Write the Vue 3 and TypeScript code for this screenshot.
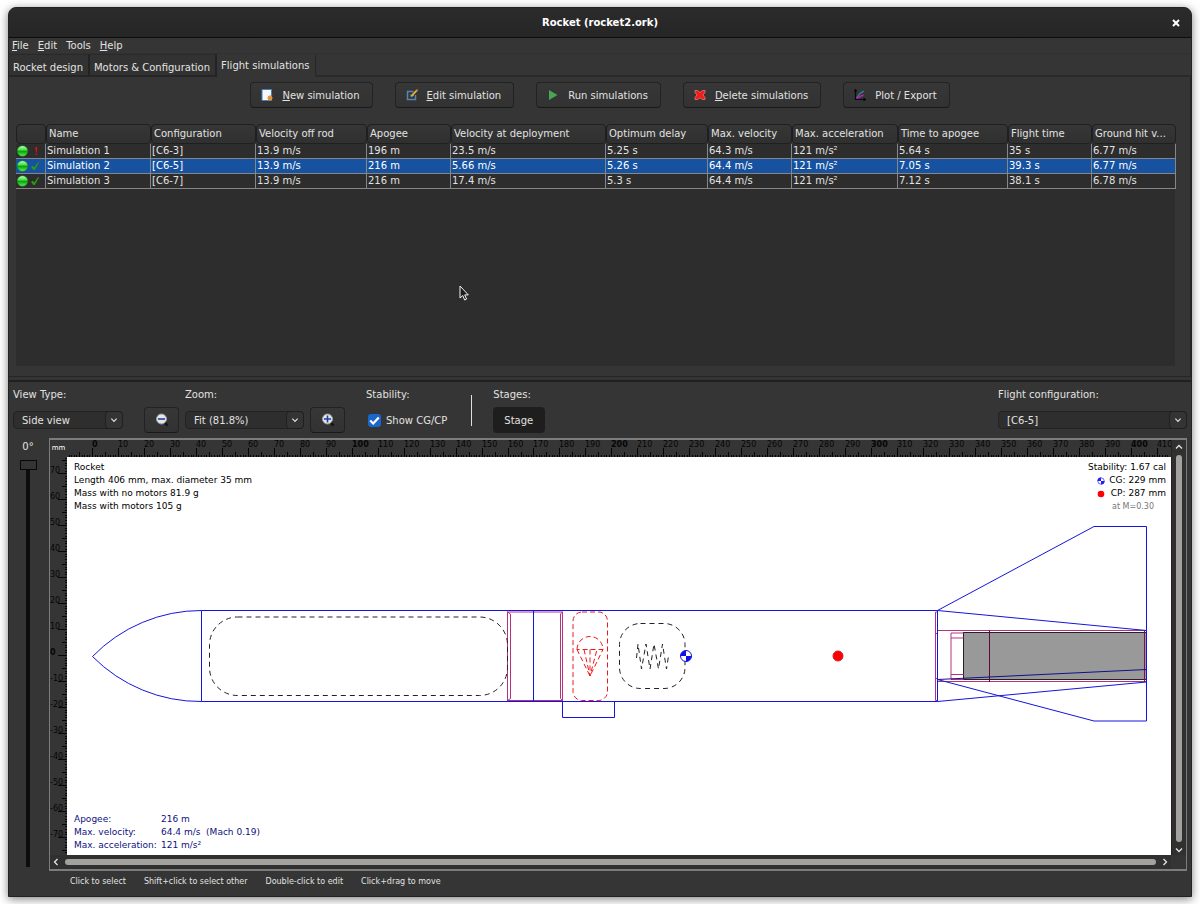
<script setup lang="ts">
import { ref } from 'vue'

interface Simulation {
  status: 'warn' | 'ok'
  cells: string[]
}

interface Tick {
  mm: number
  pos: number
  size: number
}

const menus = [
  { key: 'F', rest: 'ile' },
  { key: 'E', rest: 'dit' },
  { key: '', rest: 'Tools' },
  { key: 'H', rest: 'elp' },
]
const tabs = ['Rocket design', 'Motors & Configuration', 'Flight simulations']
const activeTab = ref(2)

const actions = [
  { icon: 'new', key: 'N', rest: 'ew simulation' },
  { icon: 'edit', key: 'E', rest: 'dit simulation' },
  { icon: 'run', key: '', rest: 'Run simulations' },
  { icon: 'delete', key: 'D', rest: 'elete simulations' },
  { icon: 'plot', key: '', rest: 'Plot / Export' },
]

const columns = [
  'Name', 'Configuration', 'Velocity off rod', 'Apogee', 'Velocity at deployment', 'Optimum delay',
  'Max. velocity', 'Max. acceleration', 'Time to apogee', 'Flight time', 'Ground hit v...',
]
const simulations: Simulation[] = [
  { status: 'warn', cells: ['Simulation 1', '[C6-3]', '13.9 m/s', '196 m', '23.5 m/s', '5.25 s', '64.3 m/s', '121 m/s²', '5.64 s', '35 s', '6.77 m/s'] },
  { status: 'ok', cells: ['Simulation 2', '[C6-5]', '13.9 m/s', '216 m', '5.66 m/s', '5.26 s', '64.4 m/s', '121 m/s²', '7.05 s', '39.3 s', '6.77 m/s'] },
  { status: 'ok', cells: ['Simulation 3', '[C6-7]', '13.9 m/s', '216 m', '17.4 m/s', '5.3 s', '64.4 m/s', '121 m/s²', '7.12 s', '38.1 s', '6.78 m/s'] },
]
const selected = ref(1)
const showCg = ref(true)
const rotation = ref(0)

const PX_PER_MM = 2.597
const ORIGIN_X = 92
const ORIGIN_Y = 655

function tickSize(mm: number): number {
  if (mm % 10 === 0) return 9
  return mm % 5 === 0 ? 5 : 2
}

function ticks(from: number, to: number, origin: number, scale: number): Tick[] {
  return Array.from({ length: to - from + 1 }, (_, i) => {
    const mm = from + i
    return { mm, pos: Math.round(origin + mm * scale), size: tickSize(mm) }
  })
}

const hTicks = ticks(-9, 414, ORIGIN_X, PX_PER_MM)
const vTicks = ticks(-76, 76, ORIGIN_Y, -PX_PER_MM)
const hLabels = hTicks.filter((t) => t.mm % 10 === 0)
const vLabels = vTicks.filter((t) => t.mm % 10 === 0)

const hPath = hTicks.map((t) => `M${t.pos + 0.5} 457v-${t.size}`).join('')
const vPath = vTicks.map((t) => `M67 ${t.pos + 0.5}h-${t.size}`).join('')

const performance = [
  { name: 'Apogee:', value: '216 m' },
  { name: 'Max. velocity:', value: '64.4 m/s  (Mach 0.19)' },
  { name: 'Max. acceleration:', value: '121 m/s²' },
]
const hints = ['Click to select', 'Shift+click to select other', 'Double-click to edit', 'Click+drag to move']
</script>

<template>
  <div class="desktop">
    <div class="window">
      <header class="titlebar">
        <h1>Rocket (rocket2.ork)</h1>
        <button class="close" aria-label="Close">
          <svg width="8" height="8" viewBox="0 0 8 8"><path d="M1 1l6 6M7 1L1 7" stroke="#fff" stroke-width="2" /></svg>
        </button>
      </header>

      <nav class="menubar">
        <button v-for="m in menus" :key="m.rest"><u v-if="m.key">{{ m.key }}</u>{{ m.rest }}</button>
      </nav>

      <div class="tabs" role="tablist">
        <button
          v-for="(t, i) in tabs"
          :key="t"
          role="tab"
          :aria-selected="activeTab === i"
          :class="['tab', { active: activeTab === i }]"
          @click="activeTab = i"
        >{{ t }}</button>
        <span class="tab-fill"></span>
      </div>

      <section class="sims">
        <div class="actions">
          <button v-for="a in actions" :key="a.icon" class="btn action">
            <svg v-if="a.icon === 'new'" width="12" height="12" viewBox="0 0 12 12">
              <path d="M1 .5h9.500v11h-9.500z" fill="#f4f8fc" stroke="#4a7db5" />
              <circle cx="9" cy="9" r="2.200" fill="#f0a040" />
              <path d="M9 5.800v6.200M5.900 9h6.100M6.800 6.800l4.400 4.400M11.200 6.800L6.800 11.200" stroke="#e08a2c" stroke-width=".8" />
            </svg>
            <svg v-else-if="a.icon === 'edit'" width="12" height="12" viewBox="0 0 12 12">
              <path d="M7.500 2.500h-6v8h8V6" fill="none" stroke="#4f86bd" stroke-width="1.500" />
              <path d="M4 5.500l2 2 2-1.500" fill="none" stroke="#5f96c8" />
              <path d="M4.500 8l.6-2L10 1l1.300 1.200L6.300 7.300z" fill="#f0b429" />
              <path d="M10 1l1-1 1 1.200-.8 1z" fill="#d88a5a" />
            </svg>
            <svg v-else-if="a.icon === 'run'" width="12" height="12" viewBox="0 0 12 12">
              <path d="M2 1l8.500 5L2 11z" fill="#4aa552" />
            </svg>
            <svg v-else-if="a.icon === 'delete'" width="12" height="12" viewBox="0 0 12 12">
              <path d="M1 1.500h2.500L6 3.500 8.500 1.500H11v2L9 6l2 2.500v2H8.500L6 8.800 3.500 10.500H1v-2L3 6 1 3.500z" fill="#f01c1c" stroke="#e87878" stroke-width=".8" />
            </svg>
            <svg v-else width="12" height="12" viewBox="0 0 12 12">
              <path d="M1.500 1v9.500H11M.3 2.500l1.200-2 1.200 2M9.500 9.300l2 1.200-2 1.200" fill="none" stroke="#08080c" stroke-width="1.200" />
              <path d="M2.500 9L6 4.500 10 2" fill="none" stroke="#2a8c9c" stroke-width="1.200" />
              <path d="M2.500 9.500L6 7.500 9.500 6" fill="none" stroke="#b022b8" stroke-width="1.500" />
            </svg>
            <span><u v-if="a.key">{{ a.key }}</u>{{ a.rest }}</span>
          </button>
        </div>

        <div class="table-view">
          <table>
            <colgroup>
              <col class="c30" /><col class="c105" /><col class="c105" /><col class="c111" /><col class="c84" /><col class="c155" />
              <col class="c102" /><col class="c84" /><col class="c106" /><col class="c110" /><col class="c84" /><col class="c84" />
            </colgroup>
            <thead>
              <tr>
                <th aria-label="Status"><div class="head"></div></th>
                <th v-for="c in columns" :key="c"><div class="head">{{ c }}</div></th>
              </tr>
            </thead>
            <tbody>
              <tr v-for="(s, i) in simulations" :key="i" :class="{ selected: selected === i }" @click="selected = i">
                <td class="status">
                  <svg width="28" height="14" viewBox="0 0 28 14">
                    <defs>
                      <linearGradient id="ball" x1="0" y1="0" x2="0" y2="1">
                        <stop offset="0" stop-color="#b8ffb8" />
                        <stop offset=".35" stop-color="#58e458" />
                        <stop offset=".55" stop-color="#08a808" />
                        <stop offset="1" stop-color="#60f060" />
                      </linearGradient>
                    </defs>
                    <circle cx="6.500" cy="7" r="5.300" fill="url(#ball)" stroke="#188018" stroke-width=".5" />
                    <path v-if="s.status === 'ok'" d="M15 8l1.800-1.200 1.400 1.800L22 3.200l1.200-.2L18.800 11h-1.300z" fill="#2f9a10" />
                    <path v-else d="M19.300 3h2l-.5 5.500h-1zM19.600 9.500h1.400v1.500h-1.400z" fill="#e01010" />
                  </svg>
                </td>
                <td v-for="(c, j) in s.cells" :key="j">{{ c }}</td>
              </tr>
            </tbody>
          </table>
          <svg class="pointer" width="10" height="16" viewBox="0 0 10 16">
            <path d="M1 1v12l2.800-2.500L5.600 15l2-.9-1.900-4.200H9.300z" fill="#1c1c1c" stroke="#f4f4f4" />
          </svg>
        </div>
      </section>

      <section class="view">
        <div class="controls">
          <div class="field f-view">
            <label for="view-type">View Type:</label>
            <div class="row"><span class="combo"><select id="view-type"><option>Side view</option></select>
              <svg width="18" height="18" viewBox="0 0 18 18"><path d="M6 7.500l3 3 3-3" /></svg></span></div>
          </div>
          <button class="btn zoom" aria-label="Zoom out">
            <svg width="14" height="14" viewBox="0 0 14 14">
              <path d="M9 9l3.500 3.500" stroke="#151515" stroke-width="2.500" />
              <circle cx="6.500" cy="6" r="5" fill="#e4e6e8" stroke="#9a9c9e" />
              <path d="M3 6h7" stroke="#2040a8" stroke-width="1.600" />
            </svg>
          </button>
          <div class="field f-zoom">
            <label for="zoom">Zoom:</label>
            <div class="row"><span class="combo"><select id="zoom"><option>Fit (81.8%)</option></select>
              <svg width="18" height="18" viewBox="0 0 18 18"><path d="M6 7.500l3 3 3-3" /></svg></span></div>
          </div>
          <button class="btn zoom" aria-label="Zoom in">
            <svg width="14" height="14" viewBox="0 0 14 14">
              <path d="M9 9l3.500 3.500" stroke="#151515" stroke-width="2.500" />
              <circle cx="6.500" cy="6" r="5" fill="#e4e6e8" stroke="#9a9c9e" />
              <path d="M3 6h7M6.500 2.500v7" stroke="#2040a8" stroke-width="1.600" />
            </svg>
          </button>
          <div class="field f-stab">
            <span class="label">Stability:</span>
            <div class="row"><label class="check"><input v-model="showCg" type="checkbox" /><span class="box">
              <svg width="11" height="9" viewBox="0 0 11 9"><path d="M1.200 4.500l3 3L9.800 1.500" fill="none" stroke="#fff" stroke-width="2.200" /></svg>
            </span>Show CG/CP</label></div>
          </div>
          <span class="vline"></span>
          <div class="field f-stage">
            <span class="label">Stages:</span>
            <div class="row"><button class="stage" aria-pressed="true">Stage</button></div>
          </div>
          <div class="field f-config">
            <label for="config">Flight configuration:</label>
            <div class="row"><span class="combo"><select id="config"><option>[C6-5]</option></select>
              <svg width="18" height="18" viewBox="0 0 18 18"><path d="M6 7.500l3 3 3-3" /></svg></span></div>
          </div>
        </div>

        <div class="figure-row">
          <div class="rotate">
            <label for="rotation">{{ rotation }}°</label>
            <input id="rotation" v-model.number="rotation" type="range" min="0" max="360" />
          </div>

          <div class="frame">
            <div class="unit">mm</div>
            <svg class="ruler" viewBox="67 440 1104 17">
              <path :d="hPath" stroke="#060606" />
              <text v-for="t in hLabels" :key="t.mm" :x="t.pos" y="447" :class="{ bold: t.mm % 100 === 0 }">{{ t.mm }}</text>
            </svg>
            <div class="scroll-v">
              <svg width="10" height="10" viewBox="0 0 10 10"><path d="M2 6.500l3-3 3 3" /></svg>
              <span class="bar"></span>
              <svg width="10" height="10" viewBox="0 0 10 10"><path d="M2 3.500l3 3 3-3" /></svg>
            </div>
            <svg class="ruler" viewBox="50 457 17 398">
              <path :d="vPath" stroke="#060606" />
              <text v-for="t in vLabels" :key="t.mm" x="50" :y="t.pos" :class="{ bold: t.mm === 0 }">{{ t.mm }}</text>
            </svg>
            <div class="canvas">
              <svg class="drawing" viewBox="67 457 1104 398" fill="none">
                <!-- motor -->
                <rect x="963.5" y="632.5" width="183" height="47" fill="#999" stroke="#222" />

                <!-- internal tubes and rings -->
                <g stroke="#b8307c">
                  <rect x="507.500" y="612" width="55" height="88.500" />
                  <path d="M507.500 612l3 2v84.500l-3 2M562.500 612l-2 2v84.500l2 2" />
                  <path d="M937.500 612h-2v88.500h2M935 633.500h2.500M935 678.500h2.500" />
                  <path d="M937.500 630.500h209M937.500 681.500h209" />
                  <path d="M963.500 633h-12.500v46.500h12.500M951 638h12.500M951 674.500h12.500" />
                </g>
                <path d="M1144.500 631v51" stroke="#7a1050" />
                <path d="M989.500 630.500v51.500" stroke="#5c0838" />

                <!-- airframe and fins -->
                <g stroke="#1414e0">
                  <path d="M201.500 610.500A152 152 0 0 0 92.500 656.500A152 152 0 0 0 201.500 701.500" />
                  <path d="M201.500 610.500H937.500V701.500H201.500z" />
                  <path d="M533.500 610.500V701.500" />
                  <path d="M562.500 702v15.500h52V702" />
                  <path d="M937.500 610.500L1094 526.500h52.500V630.500zM937.500 701.500L1146.500 682V630.500" />
                  <path d="M1146.500 682v39H1094L937.500 679.500" />
                </g>
                <path d="M937.500 679.500L1146.500 669.500" stroke="#10108c" />

                <!-- mass components -->
                <g stroke="#222" stroke-dasharray="5 4">
                  <rect x="209.500" y="617" width="298" height="78.500" rx="28" />
                  <rect x="619.500" y="623.500" width="65.500" height="65" rx="21" />
                  <path d="M636.500 658L638 644 641.500 669 646 644 650 669 654 644 658.500 669 662.500 644 666.500 669 668.500 656" />
                </g>
                <g stroke="#f01818" stroke-dasharray="5 3">
                  <rect x="573" y="612" width="34.500" height="88.500" rx="9" />
                  <path d="M577 649.500A13 13 0 0 1 603 649.500zM577 649.500L590 676 603 649.500M584 649.500L590 676 597 649.500M590 649.500V676" />
                </g>

                <!-- centre of gravity and centre of pressure -->
                <template v-if="showCg">
                  <circle cx="686" cy="656" r="5.500" fill="#fff" stroke="#1010e8" />
                  <path d="M686 656v-5.500a5.500 5.500 0 0 0-5.500 5.500zM686 656v5.500a5.500 5.500 0 0 0 5.500-5.500z" fill="#1010e8" />
                  <circle cx="838" cy="656" r="5" fill="#f00" stroke="#d02020" />
                </template>
              </svg>

              <div class="info">
                <div>Rocket</div>
                <div>Length 406 mm, max. diameter 35 mm</div>
                <div>Mass with no motors 81.9 g</div>
                <div>Mass with motors 105 g</div>
              </div>
              <div class="stability">
                <div>Stability: 1.67 cal</div>
                <div class="marker">
                  <svg width="8" height="8" viewBox="0 0 8 8"><circle cx="4" cy="4" r="3.200" fill="#fff" stroke="#2222f0" stroke-width=".7" /><path d="M4 4V.5A3.500 3.500 0 0 0 .5 4zM4 4v3.500A3.500 3.500 0 0 0 7.500 4z" fill="#2222f0" /></svg>
                  <span>CG: 229 mm</span>
                </div>
                <div class="marker">
                  <svg width="8" height="8" viewBox="0 0 8 8"><circle cx="4" cy="4" r="3.300" fill="#f00" /></svg>
                  <span>CP: 287 mm</span>
                </div>
                <div class="mach">at M=0.30</div>
              </div>
              <dl class="performance">
                <template v-for="p in performance" :key="p.name"><dt>{{ p.name }}</dt><dd>{{ p.value }}</dd></template>
              </dl>
            </div>
            <div class="scroll-h">
              <svg width="10" height="10" viewBox="0 0 10 10"><path d="M6.500 2l-3 3 3 3" /></svg>
              <span class="bar"></span>
              <svg width="10" height="10" viewBox="0 0 10 10"><path d="M3.500 2l3 3-3 3" /></svg>
            </div>
          </div>
        </div>

        <footer class="hints"><span v-for="h in hints" :key="h">{{ h }}</span></footer>
      </section>
    </div>
  </div>
</template>

<style>
body {
  background: #fff;
}
</style>

<style scoped>
.desktop {
  box-sizing: border-box;
  min-height: 100vh;
  padding: 7px 8px;
  display: flex;
  font-family: "DejaVu Sans", "Liberation Sans", sans-serif;
  font-size: 10px;
  line-height: 15px;
  color: #e2e2e0;
}
button,
select,
input {
  font: inherit;
  color: inherit;
  margin: 0;
}
button {
  padding: 0;
  border: 0;
  background: none;
}
.window {
  flex: 1;
  min-width: 0;
  display: flex;
  flex-direction: column;
  box-sizing: border-box;
  border: 1px solid #222;
  border-radius: 8px 8px 0 0;
  background: #353535;
  box-shadow: 0 2px 10px rgba(0, 0, 0, 0.5);
}
.titlebar {
  height: 29px;
  display: grid;
  grid-template-columns: 30px 1fr 30px;
  align-items: center;
  background: linear-gradient(#2b2b2b, #262626);
  border-bottom: 1px solid #0c0c0c;
  border-radius: 7px 7px 0 0;
}
.titlebar h1 {
  grid-column: 2;
  margin: 0;
  text-align: center;
  font-size: 10px;
  font-weight: bold;
  color: #fff;
}
.close {
  display: grid;
  place-items: center;
}
.menubar {
  display: flex;
  gap: 9px;
  padding: 0 3px;
  height: 15px;
}
.tabs {
  display: flex;
  height: 23px;
  border-top: 1px solid #313131;
}
.tab {
  padding: 4px 5px 0 4px;
  border-top: 1px solid #2a2a2a;
  border-right: 2px solid #232323;
  border-bottom: 2px solid #262626;
  background: #323232;
}
.tab.active {
  padding: 3px 5px 2px 4px;
  border-top-color: #353535;
  border-right: 1px solid #262626;
  border-bottom-color: #353535;
  background: #353535;
}
.tab-fill {
  flex: 1;
  border-bottom: 2px solid #2a2a2a;
}
.sims {
  display: flex;
  flex-direction: column;
  flex: 1 0 290px;
  padding: 5px 15px 10px 7px;
  box-sizing: border-box;
  border-right: 1px solid #262626;
  border-bottom: 1px solid #262626;
}
.actions {
  display: flex;
  justify-content: center;
  gap: 22px;
  padding-left: 9px;
  margin-bottom: 16px;
}
.btn {
  display: flex;
  align-items: center;
  justify-content: center;
  height: 26px;
  box-sizing: border-box;
  border: 1px solid #222;
  border-bottom-color: #191919;
  border-radius: 4px;
  background: linear-gradient(#373737, #323232);
}
.action {
  padding: 0 12px 0 10px;
  gap: 9px;
}
.table-view {
  position: relative;
  flex: 1;
  background: #2d2d2d;
}
table {
  width: 100%;
  table-layout: fixed;
  border-spacing: 0;
}
.c30 { width: 30px; }
.c84 { width: 84px; }
.c102 { width: 102px; }
.c105 { width: 105px; }
.c106 { width: 106px; }
.c110 { width: 110px; }
.c111 { width: 111px; }
.c155 { width: 155px; }
th {
  padding: 0;
  text-align: left;
  font-weight: normal;
  background: #353535;
}
.head {
  height: 20px;
  line-height: 18px;
  padding: 0 2px;
  box-sizing: border-box;
  border: 1px solid #1f1f1f;
  border-radius: 4px;
  white-space: nowrap;
  background: linear-gradient(#363636, #303030);
}
td {
  height: 14px;
  line-height: 14px;
  padding: 0 1px;
  white-space: nowrap;
  border-right: 1px solid #868686;
  border-bottom: 1px solid #868686;
}
td.status {
  padding: 0;
}
.status svg {
  display: block;
}
.selected {
  background: #1652a0;
  color: #fff;
}
.pointer {
  position: absolute;
  left: 443px;
  top: 161px;
}
.view {
  display: flex;
  flex-direction: column;
  margin-top: 3px;
  border-top: 2px solid #202020;
  padding: 5px 4px 7px;
}
.controls {
  display: flex;
  align-items: flex-end;
}
.field {
  display: flex;
  flex-direction: column;
}
.row {
  height: 26px;
  margin-top: 5px;
  display: flex;
  align-items: center;
}
.combo {
  position: relative;
  flex: 1;
  display: flex;
}
.combo select {
  appearance: none;
  flex: 1;
  min-width: 0;
  height: 18px;
  box-sizing: border-box;
  padding: 0 20px 0 8px;
  border: 1px solid #222;
  border-radius: 4px;
  background: #2e2e2e;
}
.combo svg {
  position: absolute;
  right: 0;
  top: 0;
  box-sizing: border-box;
  border: 1px solid #202020;
  border-radius: 4px;
  background: #343434;
  pointer-events: none;
}
.combo path,
.scroll-v path,
.scroll-h path {
  fill: none;
  stroke: #e4e4e4;
  stroke-width: 1.3;
}
.f-view {
  width: 110px;
  margin-right: 21px;
}
.f-zoom {
  width: 119px;
  margin: 0 6px;
}
.zoom {
  width: 35px;
}
.f-stab {
  margin-left: 21px;
}
.check {
  display: flex;
  align-items: center;
  gap: 5px;
  padding-left: 2px;
}
.check input {
  appearance: none;
  position: absolute;
}
.box {
  width: 13px;
  height: 13px;
  display: grid;
  place-items: center;
  border-radius: 3px;
  background: #1b66cc;
}
.check input:not(:checked) + .box svg {
  visibility: hidden;
}
.vline {
  width: 1px;
  height: 31px;
  margin: 0 21px 7px 24px;
  background: #e0e0e0;
}
.stage {
  height: 26px;
  padding: 0 12px 0 11px;
  border-radius: 4px;
  background: #1e1e1e;
}
.f-config {
  width: 189px;
  margin-left: auto;
}
.figure-row {
  display: flex;
  margin-top: 5px;
}
.rotate {
  width: 30px;
  margin-right: 6px;
  display: flex;
  flex-direction: column;
  align-items: center;
}
.rotate label {
  height: 18px;
  line-height: 18px;
  margin-bottom: 4px;
}
.rotate input {
  appearance: none;
  writing-mode: vertical-lr;
  flex: 1;
  width: 17px;
  margin-bottom: 4px;
  background: linear-gradient(#0c0c0c, #0c0c0c) center / 4px 100% no-repeat;
}
.rotate input::-webkit-slider-thumb {
  appearance: none;
  width: 17px;
  height: 10px;
  border: 1px solid #080808;
  background: #343434;
}
.frame {
  flex: 1;
  min-width: 0;
  display: grid;
  grid-template-columns: 17fr 1104fr 15px;
  border: 1px solid #7c7c7c;
  border-top-width: 2px;
  border-bottom-width: 2px;
}
.unit {
  font-size: 7px;
  text-align: center;
  line-height: 17px;
  color: #fff;
}
.ruler {
  display: block;
  width: 100%;
}
.ruler text {
  font-size: 8px;
  fill: #060606;
}
.ruler .bold {
  font-weight: bold;
}
.scroll-v {
  grid-column: 3;
  grid-row: 1 / 3;
  display: flex;
  flex-direction: column;
  align-items: center;
  gap: 3px;
  padding-top: 2px;
  border-left: 1px solid #242424;
  background: #303030;
}
.scroll-v .bar {
  flex: 1;
  width: 6px;
  border-radius: 3px;
  background: #a3a29f;
}
.scroll-h {
  grid-column: 1 / 3;
  display: flex;
  align-items: center;
  gap: 4px;
  height: 14px;
  padding: 0 1px;
  background: #303030;
}
.scroll-h .bar {
  flex: 1;
  height: 6px;
  border-radius: 3px;
  background: #a3a29f;
}
.canvas {
  position: relative;
  background: #fff;
  color: #000;
  font-size: 9px;
  line-height: 13px;
}
.drawing {
  display: block;
  width: 100%;
}
.info {
  position: absolute;
  left: 7px;
  top: 4px;
}
.stability {
  position: absolute;
  right: 5px;
  top: 4px;
  text-align: right;
}
.marker {
  display: flex;
  justify-content: flex-end;
  align-items: center;
  gap: 4px;
}
.marker span {
  min-width: 57px;
}
.mach {
  padding-right: 12px;
  font-size: 8px;
  color: #777;
}
.performance {
  position: absolute;
  left: 7px;
  bottom: 3px;
  margin: 0;
  display: grid;
  grid-template-columns: 87px auto;
  color: #101080;
  white-space: pre;
}
.performance dd {
  margin: 0;
}
.hints {
  display: flex;
  gap: 18px;
  margin-top: 3px;
  padding-left: 57px;
  font-size: 8px;
}
</style>
